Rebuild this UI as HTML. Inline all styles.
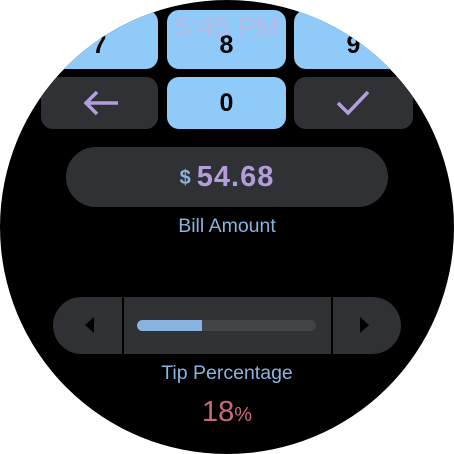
<!DOCTYPE html>
<html><head><style>
body{margin:0;width:454px;height:454px;background:#fff;overflow:hidden;font-family:"Liberation Sans",sans-serif}
.c{position:absolute;left:0;top:0;width:454px;height:454px;border-radius:50%;background:#000;overflow:hidden}
.k{position:absolute;border-radius:12px;background:#90caf9;color:#000;font-weight:bold;font-size:25px;display:flex;align-items:center;justify-content:center}
.d{background:#303134}
.ab{position:absolute;width:100%;text-align:center}
</style></head><body>
<div class="c">
<div class="k" style="left:41px;top:10px;width:117px;height:59px;padding-top:12px;box-sizing:border-box">7</div>
<div class="k" style="left:167px;top:10px;width:119px;height:59px;padding-top:12px;box-sizing:border-box">8</div>
<div class="k" style="left:294px;top:10px;width:119px;height:59px;padding-top:12px;box-sizing:border-box">9</div>
<div class="k d" style="left:41px;top:77px;width:117px;height:52px">
<svg width="40" height="30" viewBox="0 0 40 30"><path d="M5 15H38M17 4L6 15L17 26" stroke="#b39ddb" stroke-width="3.5" fill="none"/></svg></div>
<div class="k" style="left:167px;top:77px;width:119px;height:52px">0</div>
<div class="k d" style="left:294px;top:77px;width:119px;height:52px">
<svg width="40" height="30" viewBox="0 0 40 30"><path d="M4 15L14 25L34 4" stroke="#b39ddb" stroke-width="3.5" fill="none"/></svg></div>
<div class="ab" style="top:11px;font-size:28px;color:rgba(200,180,225,0.75)">5:45 PM</div>
<div style="position:absolute;left:66px;top:147px;width:322px;height:60px;border-radius:30px;background:#303134;display:flex;align-items:center;justify-content:center;font-weight:bold">
<span style="color:#8ab4e0;font-size:20px;margin-right:6px;margin-top:2px">$</span><span style="color:#b39ddb;font-size:29px;letter-spacing:1px">54.68</span></div>
<div class="ab" style="top:215px;font-size:19.5px;color:#8ab4e0">Bill Amount</div>
<div style="position:absolute;left:53px;top:297px;width:348px;height:57px;border-radius:29px;background:#303134"></div>
<div style="position:absolute;left:122px;top:297px;width:2px;height:57px;background:#000"></div>
<div style="position:absolute;left:331px;top:297px;width:2px;height:57px;background:#000"></div>
<div style="position:absolute;left:137px;top:320px;width:179px;height:11px;border-radius:6px;background:#434447"></div>
<div style="position:absolute;left:137px;top:320px;width:65px;height:11px;border-radius:6px 0 0 6px;background:#8ab4e0"></div>
<svg style="position:absolute;left:84px;top:317px" width="12" height="16"><path d="M10 0V16L1 8Z" fill="#000"/></svg>
<svg style="position:absolute;left:358px;top:317px" width="12" height="16"><path d="M2 0V16L11 8Z" fill="#000"/></svg>
<div class="ab" style="top:362px;font-size:19.5px;color:#8ab4e0">Tip Percentage</div>
<div class="ab" style="top:396px;font-size:29px;color:#c96a75">18<span style="font-size:20px">%</span></div>
</div>
</body></html>
